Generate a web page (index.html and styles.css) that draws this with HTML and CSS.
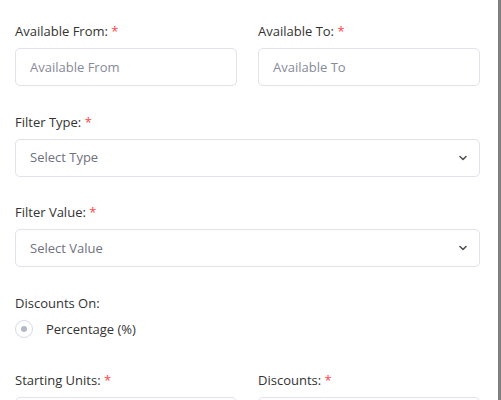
FILE: index.html
```html
<!DOCTYPE html>
<html>
<head>
<meta charset="utf-8">
<link rel="stylesheet" href="styles.css">
</head>
<body>
<div class="page">
  <form class="form">
    <div class="row two">
      <div class="group">
        <label class="label">Available From: <span class="req">*</span></label>
        <div class="field"><span class="ph">Available From</span></div>
      </div>
      <div class="group">
        <label class="label">Available To: <span class="req">*</span></label>
        <div class="field"><span class="ph">Available To</span></div>
      </div>
    </div>
    <div class="group">
      <label class="label">Filter Type: <span class="req">*</span></label>
      <div class="field select"><span class="ph">Select Type</span>
        <svg class="chev" width="8" height="6" viewBox="0 0 8 6"><path d="M1 1.5 L4 4.5 L7 1.5" fill="none" stroke="#555" stroke-width="1.6" stroke-linecap="round" stroke-linejoin="round"/></svg>
      </div>
    </div>
    <div class="group">
      <label class="label">Filter Value: <span class="req">*</span></label>
      <div class="field select"><span class="ph">Select Value</span>
        <svg class="chev" width="8" height="6" viewBox="0 0 8 6"><path d="M1 1.5 L4 4.5 L7 1.5" fill="none" stroke="#555" stroke-width="1.6" stroke-linecap="round" stroke-linejoin="round"/></svg>
      </div>
    </div>
    <div class="group radio-group">
      <label class="label">Discounts On:</label>
      <div class="radio-row"><span class="radio"><span class="dot"></span></span><span class="radio-text">Percentage (%)</span></div>
    </div>
    <div class="row two">
      <div class="group">
        <label class="label">Starting Units: <span class="req">*</span></label>
        <div class="field"><span class="ph"></span></div>
      </div>
      <div class="group">
        <label class="label">Discounts: <span class="req">*</span></label>
        <div class="field"><span class="ph"></span></div>
      </div>
    </div>
  </form>
  <div class="scrollbar"></div>
</div>
</body>
</html>
```
FILE: styles.css
```css
html, body {
  margin: 0;
  padding: 0;
  background: #fff;
  height: 100%;
  overflow: hidden;
}
body {
  font-family: "Open Sans", "Noto Sans", sans-serif;
  font-size: 13px;
  color: #333;
}
.page {
  display: flex;
  height: 400px;
  overflow: hidden;
}
.form {
  flex: 1;
  padding: 21px 18px 0 15px;
}
.scrollbar {
  width: 3px;
  background: #7f7f7f;
}
.row.two {
  display: grid;
  grid-template-columns: 1fr 1fr;
  column-gap: 21px;
}
.group {
  margin-bottom: 25.5px;
}
.label {
  display: block;
  line-height: 20px;
  margin-bottom: 7px;
  color: #333;
}
.req {
  color: #f44;
}
.field {
  box-sizing: border-box;
  height: 38px;
  border: 1px solid #e1e2ea;
  border-radius: 5px;
  display: flex;
  align-items: center;
  padding: 0 12px 0 14px;
}
.ph {
  color: #878a9a;
  flex: 1;
  margin-top: -1px;
}
.select .ph {
  color: #6f7180;
}
.chev {
  display: block;
}
.radio-group {
  margin-bottom: 31.5px;
}
.radio-row {
  display: flex;
  align-items: center;
  height: 20px;
  margin-top: -1px;
}
.radio {
  box-sizing: border-box;
  width: 18px;
  height: 18px;
  border: 1px solid #d6d9e6;
  border-radius: 50%;
  display: flex;
  align-items: center;
  justify-content: center;
  margin-right: 13px;
}
.dot {
  width: 6px;
  height: 6px;
  border-radius: 50%;
  background: #b5b8c6;
}
.radio-text {
  color: #333;
}
```
